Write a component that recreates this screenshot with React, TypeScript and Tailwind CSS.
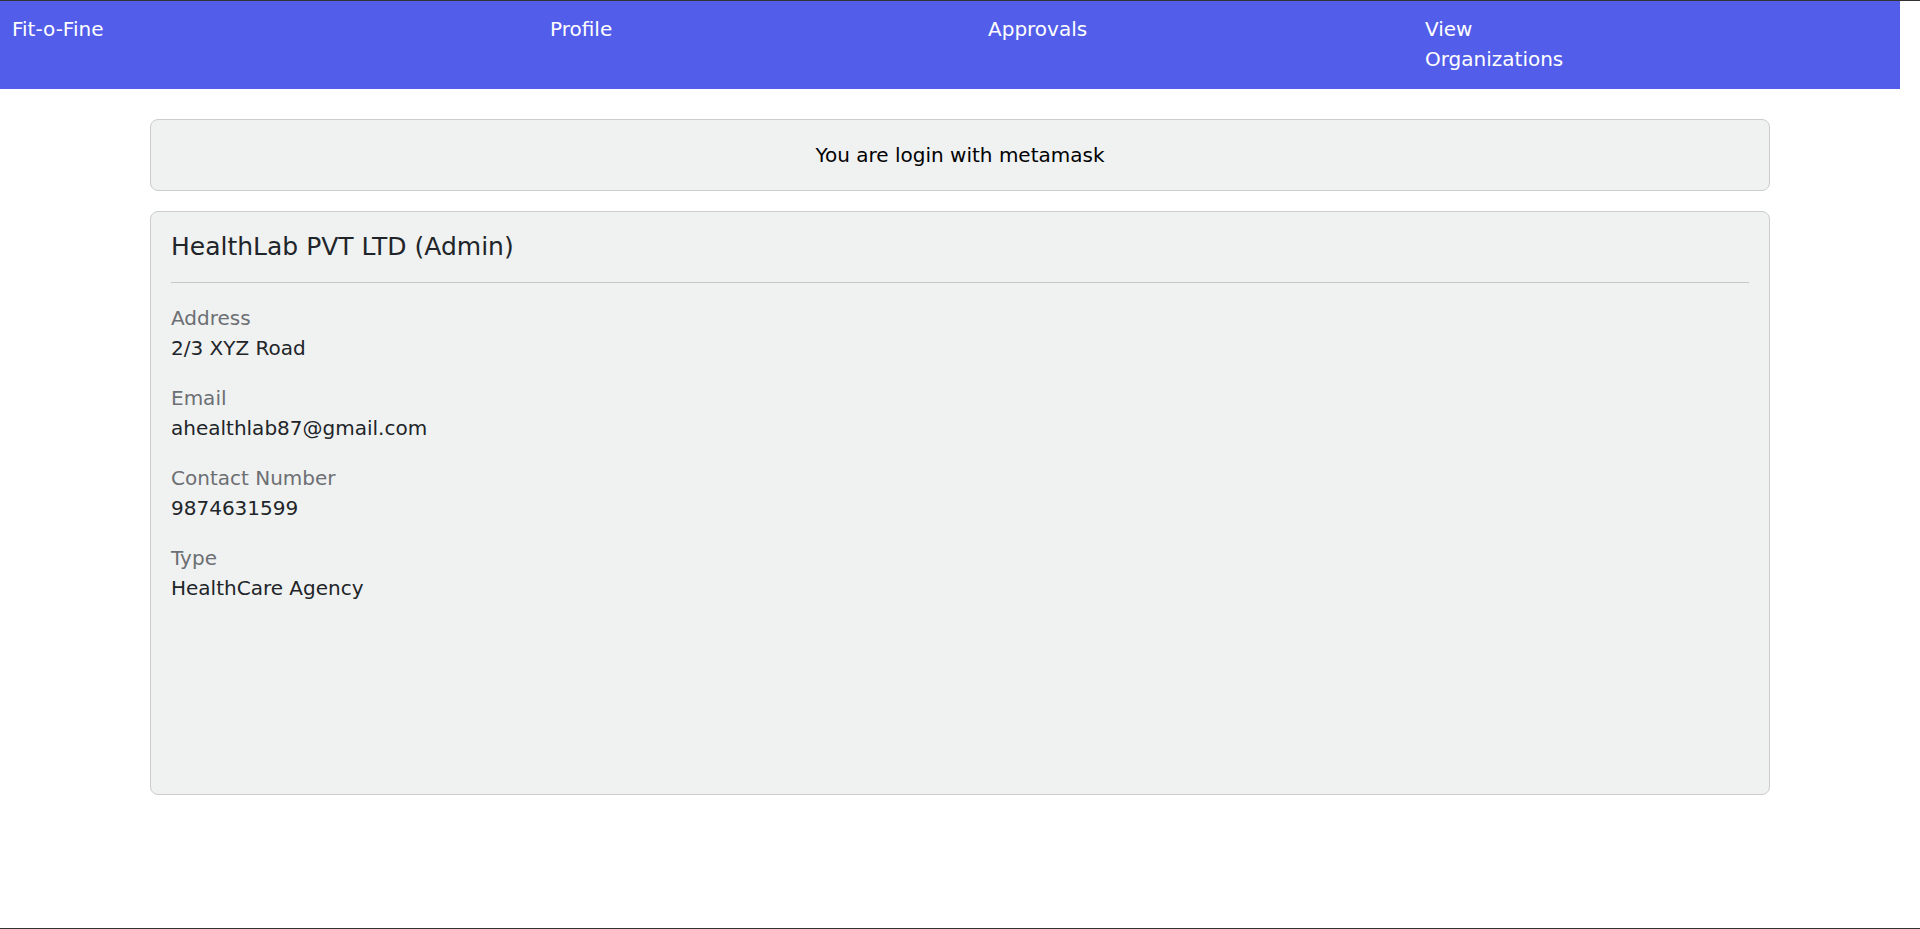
import React from "react";

const navItems = [
  { label: "Fit-o-Fine", width: "w-[538px]" },
  { label: "Profile", width: "w-[438px]" },
  { label: "Approvals", width: "w-[437px]" },
  { label: "View Organizations", width: "w-[150px]" },
];

const details = [
  { label: "Address", value: "2/3 XYZ Road" },
  { label: "Email", value: "ahealthlab87@gmail.com" },
  { label: "Contact Number", value: "9874631599" },
  { label: "Type", value: "HealthCare Agency" },
];

const App = () => {
  return (
    <div className="h-[929px] bg-white border-t border-b border-[#333333] font-['DejaVu_Sans',sans-serif] text-[20px] leading-[30px] text-[#212529]">
      <nav className="w-[1900px] h-[88px] bg-[#525eea] flex items-start pl-[12px] pt-[13px] text-white">
        {navItems.map((item) => (
          <a key={item.label} className={`${item.width} block cursor-pointer`}>
            {item.label}
          </a>
        ))}
      </nav>

      <main className="w-[1620px] mx-auto mt-[30px] flex flex-col gap-[20px]">
        <div className="bg-[#f0f1f1] border border-[#cccccc] rounded-[8px] px-[20px] py-[20px] text-center text-black">
          You are login with metamask
        </div>

        <div className="h-[584px] bg-[#f0f1f1] border border-[#cccccc] rounded-[8px] px-[20px] pt-[20px]">
          <h5 className="text-[25px] leading-[30px] text-[#212529]">
            HealthLab PVT LTD (Admin)
          </h5>
          <hr className="mt-[20px] mb-[20px] border-t border-[#c6c7c8]" />
          <div className="flex flex-col gap-[20px]">
            {details.map((d) => (
              <div key={d.label}>
                <p className="text-[#6c6f73]">{d.label}</p>
                <p className="text-[#212529]">{d.value}</p>
              </div>
            ))}
          </div>
        </div>
      </main>
    </div>
  );
};

export default App;
